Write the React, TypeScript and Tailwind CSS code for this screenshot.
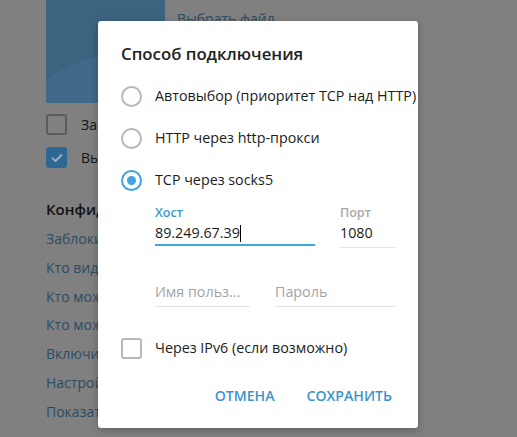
import React from "react";

const font = { fontFamily: '"Open Sans", "Noto Sans", sans-serif' };

const links = [
  "Заблокированные пользователи",
  "Кто видит мой номер телефона",
  "Кто может видеть время входа",
  "Кто может звонить мне",
  "Включить пиринговые звонки",
  "Настройки пересылки сообщений",
  "Показать активные сеансы",
];

function Radio({ checked, label }: { checked?: boolean; label: string }) {
  return (
    <div className="flex h-[42px] items-center gap-[13px]">
      <span
        className={
          checked
            ? "flex h-[21px] w-[21px] shrink-0 items-center justify-center rounded-full border-2 border-[#3ea5e0]"
            : "flex h-[21px] w-[21px] shrink-0 items-center justify-center rounded-full border-2 border-[#b8b8b8]"
        }
      >
        {checked && <span className="h-[9px] w-[9px] rounded-full bg-[#3ea5e0]" />}
      </span>
      <span className="whitespace-nowrap text-[14.3px] text-[#1c1c1c]">{label}</span>
    </div>
  );
}

export default function App() {
  return (
    <div className="relative h-[437px] w-[517px] overflow-hidden bg-[#808080]" style={font}>
      {/* dimmed settings page behind */}
      <div className="flex flex-col pl-[46px]">
        <div className="flex gap-3">
          <div className="relative h-[103px] w-[119px] overflow-hidden rounded-b-[3px] bg-[#3c6480]">
            <div className="absolute -left-10 top-[52px] h-[200px] w-[260px] rounded-[50%] bg-[#41698a]" />
          </div>
          <span className="pt-[8px] text-[14px] text-[#2d4d63]">Выбрать файл</span>
        </div>
        <div className="mt-[11px] flex h-[21px] items-center gap-[14px]">
          <span className="h-[21px] w-[21px] rounded-[3px] border-2 border-[#5c5c5c]" />
          <span className="text-[14px] text-[#141414]">Загружать автоматически</span>
        </div>
        <div className="mt-[12px] flex h-[21px] items-center gap-[14px]">
          <span className="flex h-[21px] w-[21px] items-center justify-center rounded-[3px] bg-[#2d6893]">
            <svg width="12" height="10" viewBox="0 0 12 10" fill="none">
              <path d="M1.5 5.2l3 3 6-6.2" stroke="#9fb4c6" strokeWidth="1.8" strokeLinecap="round" strokeLinejoin="round" />
            </svg>
          </span>
          <span className="text-[14px] text-[#141414]">Выключить звук</span>
        </div>
        <div className="mt-[30px] text-[15px] font-semibold leading-[22px] text-[#121212]">Конфиденциальность</div>
        <div className="mt-[5px] flex flex-col">
          {links.map((l) => (
            <div key={l} className="h-[28.8px] whitespace-nowrap text-[14px] leading-[28.8px] text-[#2c4c62]">
              {l}
            </div>
          ))}
        </div>
      </div>

      {/* dialog */}
      <div className="absolute left-[98px] top-[21px] flex h-[407px] w-[320px] flex-col rounded-[3px] bg-white pb-[13px] pl-[23px] pr-[16px] pt-[22px] shadow-[0_2px_8px_rgba(0,0,0,0.25)]">
        <div className="text-[16.8px] font-semibold leading-[22px] text-[#222]">Способ подключения</div>
        <div className="mt-[10px] flex flex-col">
          <Radio label="Автовыбор (приоритет TCP над HTTP)" />
          <Radio label="HTTP через http-прокси" />
          <Radio checked label="TCP через socks5" />
        </div>
        <div className="flex flex-col pl-[34px]">
          <div className="mt-[4px] flex gap-[25px]">
            <div className="flex w-[160px] flex-col">
              <span className="h-[16px] text-[12.5px] font-semibold leading-[16px] text-[#3a98d3]">Хост</span>
              <div className="mt-[2px] flex h-[23px] items-start border-b-2 border-[#3ea5e0] pb-[3px]">
                <span className="text-[14.3px] leading-[20px] text-[#1c1c1c]">89.249.67.39</span>
                <span className="mt-[2px] h-[17px] w-px bg-black" />
              </div>
            </div>
            <div className="flex w-[55px] flex-col">
              <span className="h-[16px] text-[12.5px] font-semibold leading-[16px] text-[#a8a8a8]">Порт</span>
              <div className="mt-[2px] h-[25px] border-b border-[#e4e4e4] pb-[4px] text-[14.3px] leading-[20px] text-[#1c1c1c]">
                1080
              </div>
            </div>
          </div>
          <div className="mt-[34px] flex gap-[25px]">
            <div className="h-[25px] w-[95px] border-b border-[#e4e4e4] pb-[4px] text-[14.3px] leading-[20px] text-[#a3a3a3]">
              Имя польз...
            </div>
            <div className="h-[25px] w-[120px] border-b border-[#e4e4e4] pb-[4px] text-[14.3px] leading-[20px] text-[#a3a3a3]">
              Пароль
            </div>
          </div>
        </div>
        <div className="mt-[20px] flex h-[42px] items-center gap-[13px]">
          <span className="h-[21px] w-[21px] rounded-[3px] border-2 border-[#b8b8b8]" />
          <span className="text-[14.3px] text-[#1c1c1c]">Через IPv6 (если возможно)</span>
        </div>
        <div className="mt-[9px] flex justify-end gap-[12px]">
          <button className="h-[36px] px-[10px] text-[14.1px] font-semibold text-[#3894cf]">ОТМЕНА</button>
          <button className="h-[36px] px-[10px] text-[14.1px] font-semibold text-[#3894cf]">СОХРАНИТЬ</button>
        </div>
      </div>
    </div>
  );
}
